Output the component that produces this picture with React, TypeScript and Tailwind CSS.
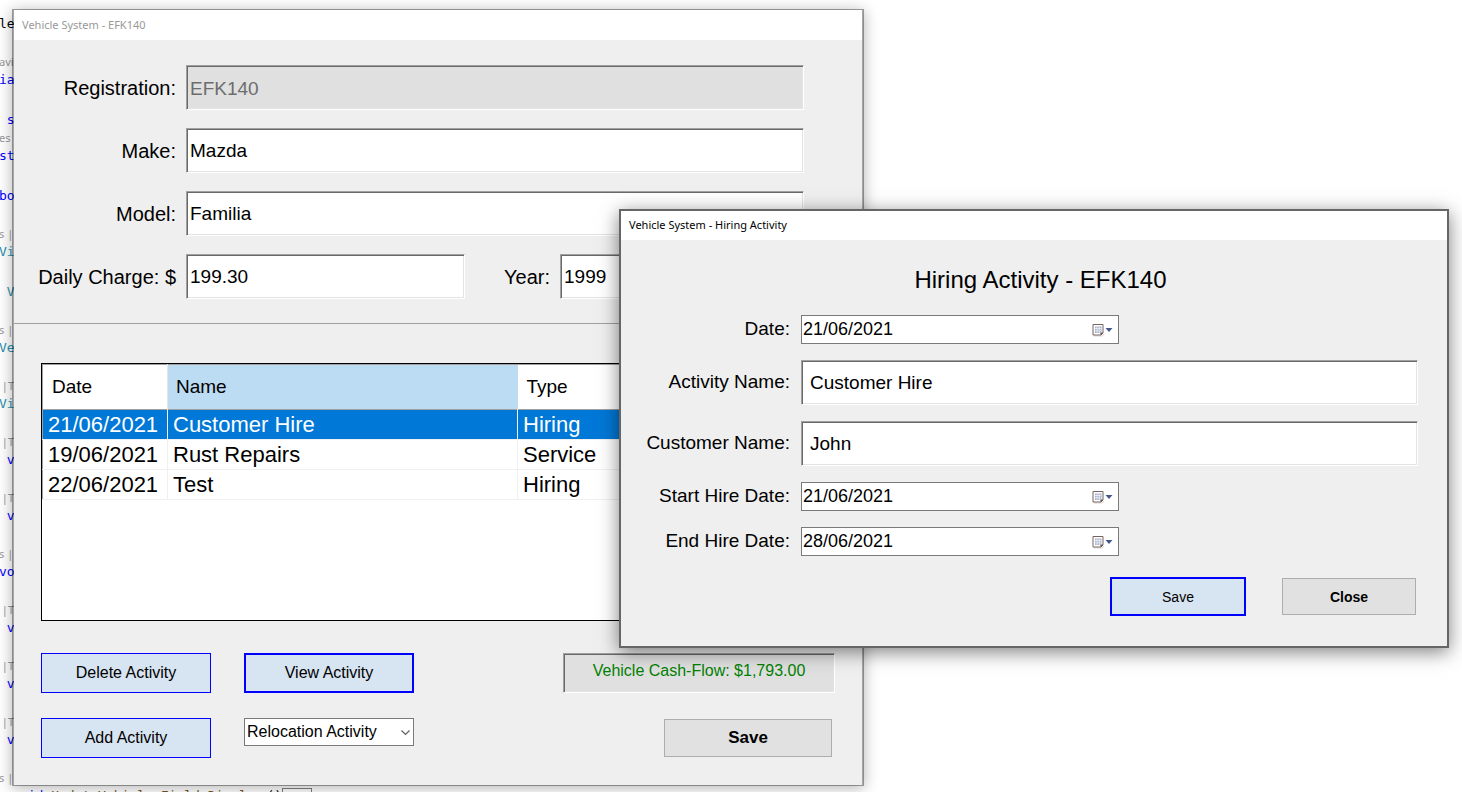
import React, { useState } from "react";

type CodeLine = { text: string; kind: "plain" | "lens" | "keyword" | "type"; gap: string };

const codeLines: CodeLine[] = [
  { text: "le", kind: "plain", gap: "mt-0" },
  { text: "avis", kind: "lens", gap: "mt-[22px]" },
  { text: "ia", kind: "keyword", gap: "mt-0" },
  { text: " s", kind: "keyword", gap: "mt-6" },
  { text: "es", kind: "lens", gap: "mt-0.5" },
  { text: "st", kind: "keyword", gap: "mt-0" },
  { text: "bo", kind: "keyword", gap: "mt-6" },
  { text: "s |", kind: "lens", gap: "mt-[22px]" },
  { text: "Vi", kind: "type", gap: "mt-0" },
  { text: " V", kind: "type", gap: "mt-6" },
  { text: "s |", kind: "lens", gap: "mt-[22px]" },
  { text: "Ve", kind: "type", gap: "mt-0" },
  { text: " |T", kind: "lens", gap: "mt-[22px]" },
  { text: "Vi", kind: "type", gap: "mt-0" },
  { text: " |T", kind: "lens", gap: "mt-[22px]" },
  { text: " v", kind: "keyword", gap: "mt-0" },
  { text: " |T", kind: "lens", gap: "mt-[22px]" },
  { text: " v", kind: "keyword", gap: "mt-0" },
  { text: "s |", kind: "lens", gap: "mt-[22px]" },
  { text: "vo", kind: "keyword", gap: "mt-0" },
  { text: " |T", kind: "lens", gap: "mt-[22px]" },
  { text: " v", kind: "keyword", gap: "mt-0" },
  { text: " |T", kind: "lens", gap: "mt-[22px]" },
  { text: " v", kind: "keyword", gap: "mt-0" },
  { text: " |T", kind: "lens", gap: "mt-[22px]" },
  { text: " v", kind: "keyword", gap: "mt-0" },
  { text: "s |", kind: "lens", gap: "mt-[22px]" },
];

const lineStyles: Record<CodeLine["kind"], string> = {
  plain: "h-4 font-['DejaVu_Sans_Mono',monospace] text-[13px] leading-4 text-black",
  lens: "h-[18px] font-['Noto_Sans',sans-serif] text-[11px] leading-4 text-[#999999]",
  keyword: "h-4 font-['DejaVu_Sans_Mono',monospace] text-[13px] leading-4 text-[#0000ff]",
  type: "h-4 font-['DejaVu_Sans_Mono',monospace] text-[13px] leading-4 text-[#2b91af]",
};

function CodeEditor() {
  return (
    <div aria-hidden="true" className="h-screen overflow-hidden pt-4">
      <div className="-ml-px whitespace-pre">
        {codeLines.map((line, i) => (
          <div key={i} className={`${lineStyles[line.kind]} ${line.gap}`}>
            {line.text}
          </div>
        ))}
      </div>
      <div className="flex h-5 pl-3 whitespace-pre font-['DejaVu_Sans_Mono',monospace] text-[13px] leading-4">
        <span className="text-[#0000ff]">{"void "}</span>
        <span className="text-[#74531f]">UpdateVehicle_Field_Display</span>
        <span className="pl-1">()</span>
        <span className="border border-[#808080] px-0.5 text-[#808080]">...</span>
      </div>
    </div>
  );
}

const sunken =
  "border border-t-[#a0a0a0] border-l-[#a0a0a0] border-r-white border-b-white shadow-[inset_1px_1px_0_#696969,inset_-1px_-1px_0_#e3e3e3]";

type FieldProps = {
  id: string;
  value: string;
  onChange?: (v: string) => void;
  disabled?: boolean;
  padding: string;
};

function TextField({ id, value, onChange, disabled, padding }: FieldProps) {
  return (
    <input
      id={id}
      type="text"
      value={value}
      disabled={disabled}
      onChange={(e) => onChange?.(e.target.value)}
      className={`h-[45px] w-full min-w-0 rounded-none text-[19px] outline-none ${padding} ${sunken} ${
        disabled ? "bg-[#e0e0e0] text-[#6d6d6d]" : "bg-white text-black"
      }`}
    />
  );
}

function CalendarIcon() {
  return (
    <svg width="22" height="14" viewBox="0 0 22 14" aria-hidden="true">
      <path d="M2 13h8.500l1.500-2" fill="none" stroke="#dcd6d2" />
      <path d="M1 1.500h10v8.500l-2 2H1z" fill="#fff" stroke="#75645f" />
      <path d="M8.500 12V9.500H11z" fill="#4a3d3a" />
      <path d="M3 3.500h6.500v6.500H3z" fill="#aab3cc" />
      <path d="M3 5.500h6.500M3 7.800h6.500M5 3.500v6.500M7.300 3.500v6.500" stroke="#f4f6fb" strokeWidth=".7" />
      <path d="M13.500 5h7l-3.500 4z" fill="#44578c" />
    </svg>
  );
}

function DateField({ id, initial }: { id: string; initial: string }) {
  const [value, setValue] = useState(initial);
  return (
    <div className="flex h-[29px] w-[318px] items-center border border-[#7a7a7a] bg-white pr-1">
      <input
        id={id}
        type="text"
        value={value}
        onChange={(e) => setValue(e.target.value)}
        className="h-full min-w-0 flex-1 bg-transparent pl-px text-lg leading-6 outline-none"
      />
      <button type="button" aria-label="Open calendar" className="flex h-full items-center">
        <CalendarIcon />
      </button>
    </div>
  );
}

const activities = [
  { date: "21/06/2021", name: "Customer Hire", type: "Hiring" },
  { date: "19/06/2021", name: "Rust Repairs", type: "Service" },
  { date: "22/06/2021", name: "Test", type: "Hiring" },
];

function ActivityTable() {
  const [selected, setSelected] = useState(0);
  return (
    <div className="h-[258px] border border-black bg-white">
      <table className="w-full table-fixed border-collapse border-t border-l border-[#a0a0a0] text-left">
        <colgroup>
          <col className="w-[125px]" />
          <col className="w-[350px]" />
          <col />
        </colgroup>
        <thead>
          <tr className="h-[45px] border-b border-[#a0a0a0] text-[19px]">
            <th className="border-r border-[#e5e5e5] pl-[9px] font-normal">Date</th>
            <th className="border-t border-t-[#a0a0a0] bg-[#bcdcf4] pl-2 font-normal">Name</th>
            <th className="pl-[9px] font-normal">Type</th>
          </tr>
        </thead>
        <tbody>
          {activities.map((a, i) => (
            <tr
              key={a.date}
              onClick={() => setSelected(i)}
              className={`h-[30px] border-b border-[#f0f0f0] text-[22px] leading-7 ${
                i === selected ? "bg-[#0078d7] text-white" : "text-black"
              }`}
            >
              <td className="border-r border-[#f0f0f0] p-0 pl-[5px]">{a.date}</td>
              <td className="border-r border-[#f0f0f0] p-0 pl-[5px]">{a.name}</td>
              <td className="p-0 pl-[5px]">{a.type}</td>
            </tr>
          ))}
        </tbody>
      </table>
    </div>
  );
}

function VehicleWindow() {
  const [make, setMake] = useState("Mazda");
  const [model, setModel] = useState("Familia");
  const [charge, setCharge] = useState("199.30");
  const [year, setYear] = useState("1999");
  const blueButton = "h-10 w-[170px] border-[#0000ff] bg-[#d7e4f2] text-base";
  return (
    <section className="absolute top-[9px] left-3 w-[852px] border-2 border-t border-b border-black/35 bg-[#efefef] bg-clip-padding shadow-[0_2px_14px_rgba(0,0,0,0.3)]">
      <header className="flex h-[30px] items-center bg-white pl-2 font-['Noto_Sans',sans-serif] text-[11px] text-[#999999]">
        Vehicle System - EFK140
      </header>
      <form
        onSubmit={(e) => e.preventDefault()}
        className="grid grid-cols-[162px_1fr] items-center gap-x-2.5 gap-y-[18px] border-b border-[#a0a0a0] pt-[25px] pr-[58px] pb-6 text-xl"
      >
        <label htmlFor="registration" className="text-right">Registration:</label>
        <TextField id="registration" value="EFK140" disabled padding="pl-[3px] pt-0.5" />
        <label htmlFor="make" className="text-right">Make:</label>
        <TextField id="make" value={make} onChange={setMake} padding="pl-[3px]" />
        <label htmlFor="model" className="text-right">Model:</label>
        <TextField id="model" value={model} onChange={setModel} padding="pl-[3px]" />
        <label htmlFor="charge" className="text-right">Daily Charge: $</label>
        <div className="grid grid-cols-[279px_1fr_244px] items-center">
          <TextField id="charge" value={charge} onChange={setCharge} padding="pl-[3px]" />
          <label htmlFor="year" className="pr-2.5 text-right">Year:</label>
          <TextField id="year" value={year} onChange={setYear} padding="pl-[3px]" />
        </div>
      </form>
      <div className="px-[27px] pt-[39px] pb-[27px]">
        <ActivityTable />
        <div className="mt-8 flex items-start justify-between">
          <div className="grid grid-cols-2 gap-x-[33px] gap-y-[25px]">
            <button type="button" className={`border ${blueButton}`}>Delete Activity</button>
            <button type="button" className={`border-2 ${blueButton}`}>View Activity</button>
            <button type="button" className={`border ${blueButton}`}>Add Activity</button>
            <div className="relative h-7">
              <select
                aria-label="Activity type"
                defaultValue="Relocation Activity"
                className="h-7 w-full appearance-none rounded-none border border-[#7a7a7a] bg-white pl-0.5 text-base leading-6"
              >
                <option>Relocation Activity</option>
                <option>Hiring Activity</option>
                <option>Service Activity</option>
              </select>
              <svg className="pointer-events-none absolute top-3 right-1" width="9" height="6" viewBox="0 0 9 6" aria-hidden="true">
                <path d="M.5.5l4 4 4-4" fill="none" stroke="#606060" strokeWidth="1.200" />
              </svg>
            </div>
          </div>
          <div className="flex flex-col items-end gap-[26px]">
            <output className={`flex h-10 w-[272px] items-center justify-center bg-[#e0e0e0] pb-1 text-base text-[#008000] ${sunken}`}>
              Vehicle Cash-Flow: $1,793.00
            </output>
            <button type="button" className="mr-[3px] h-[38px] w-[168px] border border-[#adadad] bg-[#e1e1e1] text-[17px] font-bold">
              Save
            </button>
          </div>
        </div>
      </div>
    </section>
  );
}

function HiringWindow() {
  const [name, setName] = useState("Customer Hire");
  const [customer, setCustomer] = useState("John");
  return (
    <section className="absolute top-[209px] left-[619px] w-[830px] border-2 border-[#666666] bg-[#efefef] shadow-[0_4px_18px_rgba(0,0,0,0.5)]">
      <header className="flex h-[29px] items-center bg-white pl-2 font-['Noto_Sans',sans-serif] text-[11px] text-black">
        Vehicle System - Hiring Activity
      </header>
      <form onSubmit={(e) => e.preventDefault()} className="pt-6 pr-[29px] pb-[30px] text-[19px]">
        <h1 className="pl-[42px] text-center text-2xl leading-8">Hiring Activity - EFK140</h1>
        <div className="mt-[19px] grid grid-cols-[169px_1fr] items-center gap-x-[11px] gap-y-4">
          <label htmlFor="date" className="text-right">Date:</label>
          <DateField id="date" initial="21/06/2021" />
          <label htmlFor="activity" className="text-right">Activity Name:</label>
          <TextField id="activity" value={name} onChange={setName} padding="pl-2" />
          <label htmlFor="customer" className="text-right">Customer Name:</label>
          <TextField id="customer" value={customer} onChange={setCustomer} padding="pl-2" />
          <label htmlFor="start" className="text-right">Start Hire Date:</label>
          <DateField id="start" initial="21/06/2021" />
          <label htmlFor="end" className="text-right">End Hire Date:</label>
          <DateField id="end" initial="28/06/2021" />
        </div>
        <div className="mt-[21px] mr-0.5 flex items-center justify-end gap-9 text-sm">
          <button type="submit" className="h-[39px] w-[136px] border-2 border-[#0000ff] bg-[#d7e4f2]">Save</button>
          <button type="button" className="h-[37px] w-[134px] border border-[#adadad] bg-[#e1e1e1] font-bold">Close</button>
        </div>
      </form>
    </section>
  );
}

export default function App() {
  return (
    <main className="relative min-h-screen overflow-hidden bg-white font-['Liberation_Sans',Arial,sans-serif] text-black">
      <CodeEditor />
      <VehicleWindow />
      <HiringWindow />
    </main>
  );
}
